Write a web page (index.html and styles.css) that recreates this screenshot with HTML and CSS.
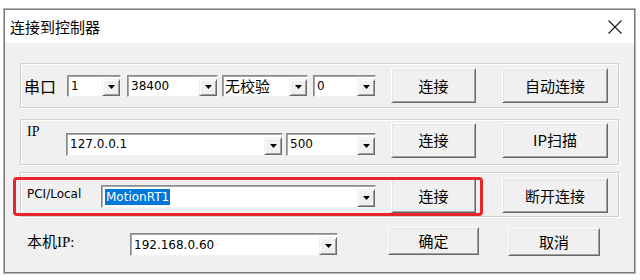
FILE: index.html
```html
<!DOCTYPE html>
<html>
<head>
<meta charset="utf-8">
<link rel="stylesheet" href="styles.css">
</head>
<body>
<div class="window">
  <div class="titlebar">
    <span class="title">连接到控制器</span>
    <svg class="close" width="14" height="14" viewBox="0 0 14 14"><path d="M0.5 0.5 L13.5 13.5 M13.5 0.5 L0.5 13.5" stroke="#1a1a1a" stroke-width="1.1" fill="none"/></svg>
  </div>
  <div class="body">
    <div class="group g1">
      <span class="lbl lbl-serial">串口</span>
      <div class="combo c-port"><span class="val num">1</span><span class="drop"><svg width="7" height="4" viewBox="0 0 7 4"><path d="M0 0 H7 L3.5 4 Z" fill="#000"/></svg></span></div>
      <div class="combo c-baud"><span class="val num">38400</span><span class="drop"><svg width="7" height="4" viewBox="0 0 7 4"><path d="M0 0 H7 L3.5 4 Z" fill="#000"/></svg></span></div>
      <div class="combo c-parity"><span class="val cjk">无校验</span><span class="drop"><svg width="7" height="4" viewBox="0 0 7 4"><path d="M0 0 H7 L3.5 4 Z" fill="#000"/></svg></span></div>
      <div class="combo c-stop"><span class="val num">0</span><span class="drop"><svg width="7" height="4" viewBox="0 0 7 4"><path d="M0 0 H7 L3.5 4 Z" fill="#000"/></svg></span></div>
      <button class="btn b-connect">连接</button>
      <button class="btn b-wide">自动连接</button>
    </div>
    <div class="group g2">
      <span class="lbl lbl-ip">IP</span>
      <div class="combo c-ip"><span class="val num">127.0.0.1</span><span class="drop"><svg width="7" height="4" viewBox="0 0 7 4"><path d="M0 0 H7 L3.5 4 Z" fill="#000"/></svg></span></div>
      <div class="combo c-port2"><span class="val num">500</span><span class="drop"><svg width="7" height="4" viewBox="0 0 7 4"><path d="M0 0 H7 L3.5 4 Z" fill="#000"/></svg></span></div>
      <button class="btn b-connect">连接</button>
      <button class="btn b-wide">IP扫描</button>
    </div>
    <div class="group g3">
      <span class="lbl lbl-pci">PCI/Local</span>
      <div class="combo c-pci"><span class="val num"><span class="sel">MotionRT1</span></span><span class="drop"><svg width="7" height="4" viewBox="0 0 7 4"><path d="M0 0 H7 L3.5 4 Z" fill="#000"/></svg></span></div>
      <button class="btn b-connect">连接</button>
      <button class="btn b-wide">断开连接</button>
    </div>
    <div class="row4">
      <span class="lbl lbl-local">本机<span class="serif">IP:</span></span>
      <div class="combo c-local"><span class="val num">192.168.0.60</span><span class="drop"><svg width="7" height="4" viewBox="0 0 7 4"><path d="M0 0 H7 L3.5 4 Z" fill="#000"/></svg></span></div>
      <button class="btn b-ok">确定</button>
      <button class="btn b-cancel">取消</button>
    </div>
    <div class="redbox"></div>
  </div>
</div>
</body>
</html>
```
FILE: styles.css
```css
html, body {
  margin: 0;
  padding: 0;
  background: #ffffff;
}
body {
  width: 640px;
  height: 280px;
  overflow: hidden;
  font-family: "Noto Sans CJK SC", "DejaVu Sans", sans-serif;
}
.window {
  box-sizing: border-box;
  margin: 9px 0 0 4px;
  width: 631px;
  height: 264px;
  border: 1px solid #7a7a7a;
  box-shadow: 0 0 0 1px #b4b4b4;
  background: #f0f0f0;
  display: flex;
  flex-direction: column;
}
.titlebar {
  height: 33px;
  background: #ffffff;
  display: flex;
  align-items: center;
  justify-content: space-between;
  padding: 0 12px 0 5px;
  flex: none;
}
.title {
  font-size: 15px;
  line-height: 20px;
  color: #000;
}
.close {
  display: block;
}
.body {
  position: relative;
  flex: 1;
  padding: 20px 0 0 15px;
  display: flex;
  flex-direction: column;
  align-items: flex-start;
}
.group {
  box-sizing: border-box;
  width: 599px;
  border: 1px solid #d2d2d2;
  box-shadow: inset 1px 1px 0 #ffffff, 1px 1px 0 #ffffff;
  display: flex;
  align-items: center;
}
.g1 { height: 45px; }
.g2 { height: 46px; margin-top: 11px; }
.g3 { height: 45px; margin-top: 7px; }
.lbl {
  color: #000;
  white-space: nowrap;
  box-sizing: border-box;
  flex: none;
}
.lbl-serial {
  font-size: 16px;
  line-height: 20px;
  padding-left: 3px;
  width: 46px;
}
.lbl-ip {
  font-family: "Liberation Serif", serif;
  font-size: 14px;
  line-height: 16px;
  padding-left: 6px;
  width: 45px;
  margin-bottom: 20px;
}
.lbl-pci {
  font-family: "DejaVu Sans", sans-serif;
  font-size: 12px;
  line-height: 16px;
  padding-left: 6px;
  width: 80px;
  margin-bottom: 2px;
}
.lbl-local {
  font-size: 15px;
  line-height: 20px;
  padding-left: 7px;
  width: 110px;
  margin-top: 4px;
}
.serif {
  font-family: "Liberation Serif", serif;
  font-size: 15px;
}
.combo {
  box-sizing: border-box;
  height: 22px;
  background: #ffffff;
  border-style: solid;
  border-width: 1px;
  border-color: #8a8a8a #f4f4f4 #f4f4f4 #8a8a8a;
  box-shadow: inset 1px 1px 0 #a8a8a8;
  display: flex;
  align-items: stretch;
  flex: none;
}
.val {
  flex: 1;
  display: flex;
  align-items: center;
  padding-left: 3px;
  color: #000;
  white-space: nowrap;
  overflow: hidden;
}
.num {
  font-family: "DejaVu Sans", sans-serif;
  font-size: 12px;
}
.cjk {
  font-size: 15px;
  line-height: 18px;
  padding-left: 2px;
}
.sel {
  background: #0078d7;
  color: #ffffff;
  padding: 1px 1px 1px 1px;
  line-height: 14px;
}
.drop {
  box-sizing: border-box;
  width: 18px;
  margin: 3px 0 0 0;
  background: #f0f0f0;
  border-style: solid;
  border-width: 1px;
  border-color: #f0f0f0 #696969 #696969 #f0f0f0;
  box-shadow: inset 1px 1px 0 #ffffff, inset -1px -1px 0 #a0a0a0;
  display: flex;
  align-items: center;
  justify-content: center;
}
.drop svg { display: block; }
.c-port { width: 54px; margin-left: 0; }
.c-baud { width: 91px; margin-left: 6px; }
.c-parity { width: 86px; margin-left: 4px; }
.c-stop { width: 63px; margin-left: 5px; }
.c-ip { width: 217px; height: 23px; margin-top: 4px; }
.c-port2 { width: 90px; height: 23px; margin-left: 3px; margin-top: 4px; }
.c-pci { width: 275px; height: 23px; margin-top: 4px; }
.c-local { width: 208px; height: 23px; margin-top: 6px; }
.btn {
  box-sizing: border-box;
  height: 35px;
  padding: 0;
  background: #f0f0f0;
  border-style: solid;
  border-width: 1px;
  border-color: #ffffff #696969 #696969 #ffffff;
  box-shadow: inset 1px 1px 0 #e3e3e3, inset -1px -1px 0 #a0a0a0;
  font-family: "Noto Sans CJK SC", sans-serif;
  font-size: 15px;
  line-height: 20px;
  color: #000;
  flex: none;
}
.b-connect { width: 85px; margin-left: 15px; }
.b-wide { width: 106px; margin-left: 26px; }
.g2 .b-connect, .g2 .b-wide { margin-bottom: 4px; }
.g3 .b-connect, .g3 .b-wide { margin-top: 2px; }
.row4 {
  margin-top: 10px;
  width: 599px;
  display: flex;
  align-items: flex-start;
}
.b-ok { width: 91px; height: 28px; margin-left: 50px; }
.b-cancel { width: 92px; height: 28px; margin-left: 29px; margin-top: 1px; }
.redbox {
  position: absolute;
  left: 8px;
  top: 134px;
  width: 470px;
  height: 39px;
  box-sizing: border-box;
  border: 3px solid #e8262a;
  border-radius: 4px;
  pointer-events: none;
}
```
